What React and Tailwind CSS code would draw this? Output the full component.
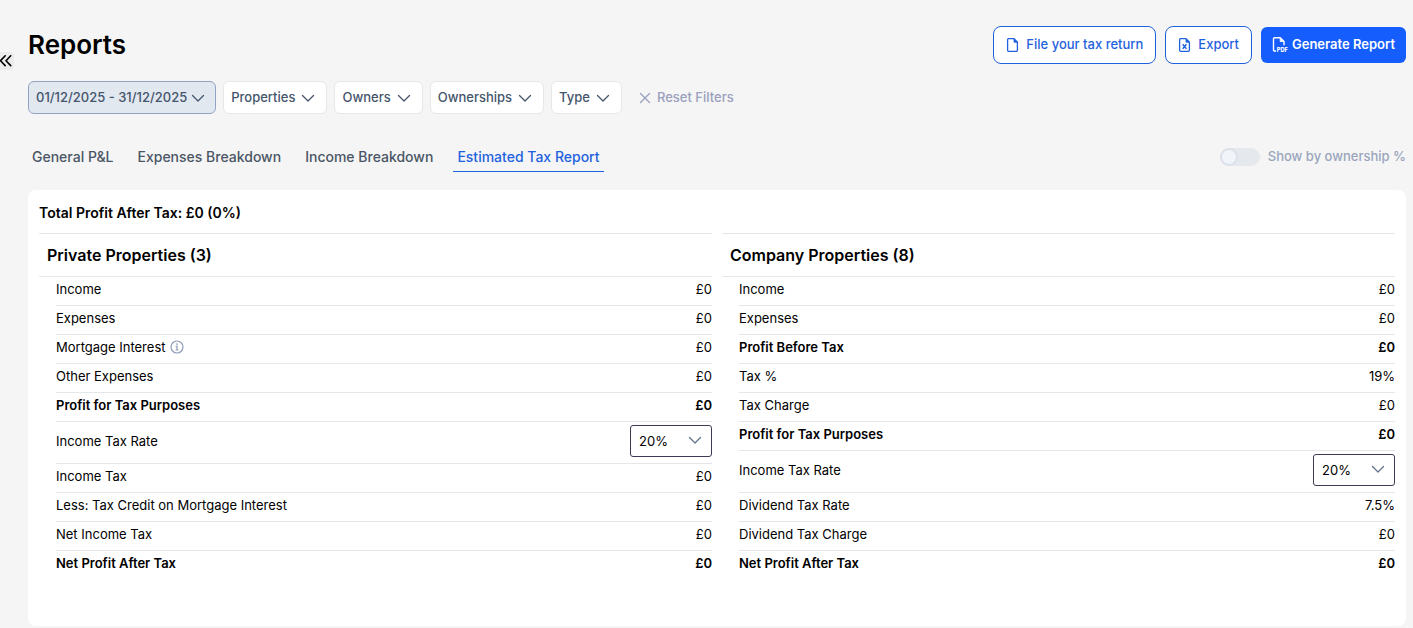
import { useState } from "react";

const filters = ["Properties", "Owners", "Ownerships", "Type"];

const tabs = ["General P&L", "Expenses Breakdown", "Income Breakdown", "Estimated Tax Report"];

const privateRows = [
  { label: "Income", value: "£0" },
  { label: "Expenses", value: "£0" },
  { label: "Mortgage Interest", value: "£0", info: true },
  { label: "Other Expenses", value: "£0" },
  { label: "Profit for Tax Purposes", value: "£0", bold: true },
  { label: "Income Tax Rate", select: true },
  { label: "Income Tax", value: "£0" },
  { label: "Less: Tax Credit on Mortgage Interest", value: "£0" },
  { label: "Net Income Tax", value: "£0" },
  { label: "Net Profit After Tax", value: "£0", bold: true },
];

const companyRows = [
  { label: "Income", value: "£0" },
  { label: "Expenses", value: "£0" },
  { label: "Profit Before Tax", value: "£0", bold: true },
  { label: "Tax %", value: "19%" },
  { label: "Tax Charge", value: "£0" },
  { label: "Profit for Tax Purposes", value: "£0", bold: true },
  { label: "Income Tax Rate", select: true },
  { label: "Dividend Tax Rate", value: "7.5%" },
  { label: "Dividend Tax Charge", value: "£0" },
  { label: "Net Profit After Tax", value: "£0", bold: true },
];

function Chevron({ className = "" }) {
  return (
    <svg viewBox="0 0 14 14" className={`h-3.5 w-3.5 shrink-0 ${className}`} fill="none" stroke="currentColor" strokeWidth="1.3" strokeLinecap="round" strokeLinejoin="round">
      <path d="M1.5 4.5 7 10l5.5-5.5" />
    </svg>
  );
}

function FileIcon() {
  return (
    <svg viewBox="0 0 14 14" className="h-3.5 w-3.5" fill="none" stroke="currentColor" strokeWidth="1.3" strokeLinejoin="round">
      <path d="M1.600 1.700q0-1 1-1H8L11.400 4.200v8q0 1.100-1 1.100H2.600q-1 0-1-1.100z" />
      <path d="M8 .7v3.500h3.400z" fill="currentColor" strokeWidth=".8" />
    </svg>
  );
}

function ExcelIcon() {
  return (
    <svg viewBox="0 0 14 14" className="h-3.5 w-3.5" fill="none" stroke="currentColor" strokeWidth="1.3" strokeLinejoin="round">
      <path d="M1.600 1.700q0-1 1-1H8L11.400 4.200v8q0 1.100-1 1.100H2.600q-1 0-1-1.100z" />
      <path d="M8 .7v3.500h3.400z" fill="currentColor" strokeWidth=".8" />
      <path d="m4.700 6.300 3.700 4.600M8.400 6.300l-3.700 4.600" strokeWidth="1.5" />
    </svg>
  );
}

function PdfIcon() {
  return (
    <svg viewBox="0 0 16 16" className="h-4 w-4 overflow-visible" fill="none" stroke="currentColor" strokeWidth="1.4" strokeLinejoin="round">
      <path d="M4 14H2.800q-1.300 0-1.300-1.300V2q0-1.300 1.300-1.300h5.400l3.800 3.800v3.700" />
      <path d="M8.200.7v3.800H12z" fill="currentColor" strokeWidth=".8" />
      <text x="4.800" y="14.800" fontSize="5.600" fontWeight="800" fill="currentColor" stroke="none">
        PDF
      </text>
    </svg>
  );
}

function InfoIcon() {
  return (
    <svg viewBox="0 0 14 14" className="h-3.5 w-3.5 text-[#8f9bb8]" fill="none" stroke="currentColor" strokeWidth="1.2">
      <circle cx="7" cy="7" r="6" />
      <path d="M5.600 6.300H7v3.600M5.500 10h3" />
      <circle cx="7" cy="4.100" r=".9" fill="currentColor" stroke="none" />
    </svg>
  );
}

function RateSelect({ id }) {
  const [rate, setRate] = useState("20");

  return (
    <div className="relative ml-auto w-[82px]">
      <select
        id={id}
        value={rate}
        onChange={(e) => setRate(e.target.value)}
        className="block h-8 w-full appearance-none rounded-[3px] border border-[#3b3b55] bg-white px-2 text-[13px]"
      >
        <option value="20">20%</option>
        <option value="40">40%</option>
        <option value="45">45%</option>
      </select>
      <Chevron className="pointer-events-none absolute top-2 right-2.5 text-slate-500" />
    </div>
  );
}

function TaxTable({ id, title, rows }) {
  return (
    <section className="min-w-0 flex-1 border-t border-gray-200">
      <h2 className="border-b border-gray-200 px-2 py-2 text-base leading-[26px] font-semibold">{title}</h2>
      <div className="pl-[17px]">
        <table className="w-full border-separate border-spacing-0 text-[13px] leading-5">
          <tbody>
            {rows.map((row, i) => {
              const last = i === rows.length - 1;
              const line = last ? "" : "border-b border-gray-200";
              const size = row.select ? "h-[42px] pt-0 pb-1" : last ? "h-7 pt-0.5 pb-1.5" : "h-[29px] pt-0.5 pb-1.5";
              const weight = row.bold ? "font-semibold" : "font-normal";
              return (
                <tr key={row.label}>
                  <th scope="row" className={`text-left ${line} ${size} ${weight}`}>
                    {row.select ? (
                      <label htmlFor={`${id}-rate`}>{row.label}</label>
                    ) : (
                      <span className="flex items-center gap-1">
                        {row.label}
                        {row.info && <InfoIcon />}
                      </span>
                    )}
                  </th>
                  <td className={`text-right ${line} ${size} ${weight}`}>
                    {row.select ? <RateSelect id={`${id}-rate`} /> : row.value}
                  </td>
                </tr>
              );
            })}
          </tbody>
        </table>
      </div>
    </section>
  );
}

export default function App() {
  const [activeTab, setActiveTab] = useState("Estimated Tax Report");

  return (
    <div className="flex min-h-screen bg-[#f5f5f5] font-[Inter,sans-serif] text-black">
      {/* Sidebar toggle */}
      <aside className="w-7 shrink-0 pt-[52px]">
        <button aria-label="Expand sidebar" className="flex h-[18px] w-3.5 items-center rounded-r-sm bg-[#ebebeb]">
          <svg viewBox="0 0 12 12" className="h-3 w-3" fill="none" stroke="currentColor" strokeWidth="1.6" strokeLinecap="round" strokeLinejoin="round">
            <path d="M5.200.8.5 5.700l4.700 4.900M10.700.8 6 5.700l4.700 4.900" />
          </svg>
        </button>
      </aside>

      <main className="min-w-0 flex-1 pr-[7px]">
        <header className="flex items-start justify-between pt-[26px]">
          <h1 className="text-[26px] leading-[38px] font-semibold">Reports</h1>
          <div className="flex items-center gap-[9px] text-[13px]">
            <button className="flex h-[38px] items-center gap-1.5 rounded-lg border border-[#1f62de] bg-white px-3 font-medium text-[#1f62de]">
              <FileIcon />
              File your tax return
            </button>
            <button className="flex h-[38px] items-center gap-1.5 rounded-lg border border-[#1f62de] bg-white px-3 font-medium text-[#1f62de]">
              <ExcelIcon />
              Export
            </button>
            <button className="flex h-9 items-center gap-1 rounded-md bg-[#155dfc] px-[11px] font-semibold text-white">
              <PdfIcon />
              Generate Report
            </button>
          </div>
        </header>

        {/* Filters */}
        <div className="mt-[17px] flex items-center gap-[7px] text-[13px] font-medium text-slate-600">
          <button className="flex h-[33px] items-center gap-1 rounded-md border border-[#94a3c4] bg-[#e2e8f0] pr-2.5 pl-[7px]">
            01/12/2025 - 31/12/2025
            <Chevron />
          </button>
          {filters.map((name) => (
            <button key={name} className="flex h-[33px] items-center gap-1.5 rounded-md border border-gray-200 bg-white pr-[11px] pl-[7px]">
              {name}
              <Chevron />
            </button>
          ))}
          <button className="ml-2.5 flex items-center gap-1.5 text-[#9aa0bd]">
            <svg viewBox="0 0 12 12" className="h-3 w-3" fill="none" stroke="currentColor" strokeWidth="1.3" strokeLinecap="round">
              <path d="m1.500 1.500 9 9M10.500 1.500l-9 9" />
            </svg>
            Reset Filters
          </button>
        </div>

        {/* Tabs */}
        <div className="mt-7 flex items-start justify-between">
          <nav className="flex gap-4 text-sm font-medium text-gray-600">
            {tabs.map((tab) => (
              <button
                key={tab}
                onClick={() => setActiveTab(tab)}
                className={`h-[30px] border-b px-1 leading-[29px] ${
                  activeTab === tab ? "border-[#1f62de] text-[#1f62de]" : "border-transparent"
                }`}
              >
                {tab}
              </button>
            ))}
          </nav>
          <label className="flex h-[30px] items-center gap-2 text-[13px] font-medium text-[#9aa5bd]">
            <input
              type="checkbox"
              disabled
              className="h-[18px] w-10 appearance-none rounded-full bg-[#e5e9ee] before:block before:h-[18px] before:w-[18px] before:rounded-full before:border-2 before:border-[#dbe1e9] before:bg-[#f1f4f8]"
            />
            Show by ownership %
          </label>
        </div>

        <div className="mt-[18px] min-h-[436px] rounded-lg bg-white px-[11px] pt-[13px]">
          <p className="text-sm leading-5 font-semibold">Total Profit After Tax: £0 (0%)</p>
          <div className="mt-2.5 flex gap-2.5">
            <TaxTable id="private" title="Private Properties (3)" rows={privateRows} />
            <TaxTable id="company" title="Company Properties (8)" rows={companyRows} />
          </div>
        </div>
      </main>
    </div>
  );
}
